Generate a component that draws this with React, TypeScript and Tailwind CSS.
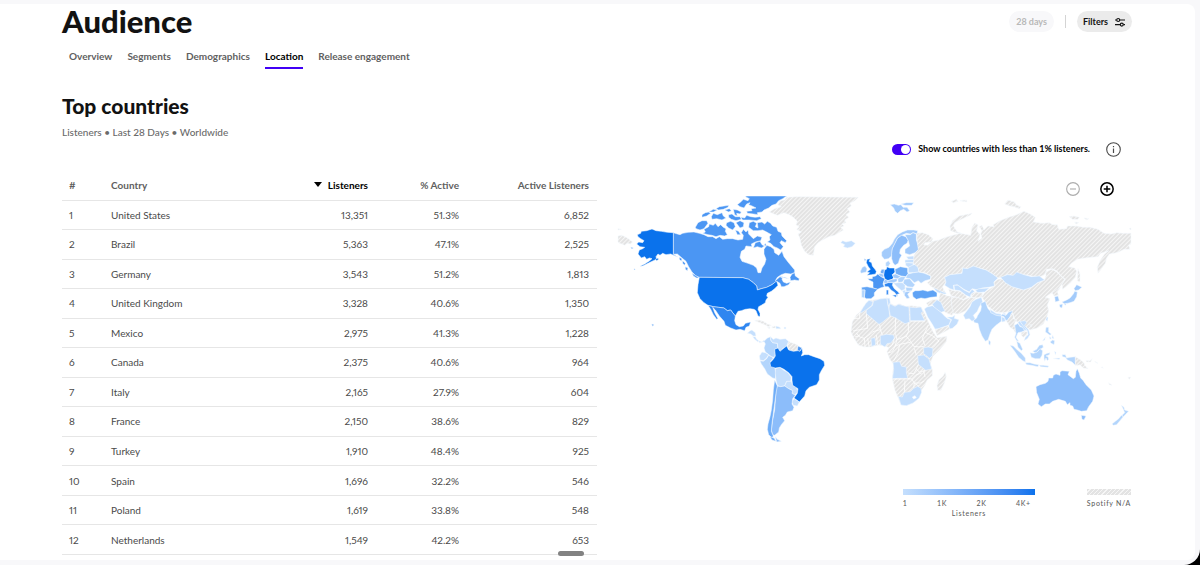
import { useState } from 'react';
import clsx from 'clsx';

interface CountryRow {
  country: string;
  listeners: string;
  active: string;
  activeListeners: string;
}

interface Shape {
  d: string;
  fill: string;
}

interface Region {
  id: string;
  x: number;
  y: number;
  shapes: Shape[];
  borders?: string;
}

const tabs = ['Overview', 'Segments', 'Demographics', 'Location', 'Release engagement'];

const rows: CountryRow[] = [
  { country: 'United States', listeners: '13,351', active: '51.3%', activeListeners: '6,852' },
  { country: 'Brazil', listeners: '5,363', active: '47.1%', activeListeners: '2,525' },
  { country: 'Germany', listeners: '3,543', active: '51.2%', activeListeners: '1,813' },
  { country: 'United Kingdom', listeners: '3,328', active: '40.6%', activeListeners: '1,350' },
  { country: 'Mexico', listeners: '2,975', active: '41.3%', activeListeners: '1,228' },
  { country: 'Canada', listeners: '2,375', active: '40.6%', activeListeners: '964' },
  { country: 'Italy', listeners: '2,165', active: '27.9%', activeListeners: '604' },
  { country: 'France', listeners: '2,150', active: '38.6%', activeListeners: '829' },
  { country: 'Turkey', listeners: '1,910', active: '48.4%', activeListeners: '925' },
  { country: 'Spain', listeners: '1,696', active: '32.2%', activeListeners: '546' },
  { country: 'Poland', listeners: '1,619', active: '33.8%', activeListeners: '548' },
  { country: 'Netherlands', listeners: '1,549', active: '42.2%', activeListeners: '653' },
];

const NA = 'url(#hatch)';
const C1 = '#c5dffd';
const C2 = '#b3d5fc';
const C3 = '#a3cbfb';
const C4 = '#8cbdfa';
const C5 = '#6fadf7';
const C6 = '#4b96f3';
const C7 = '#2f86f0';
const C8 = '#0a72ec';

// each region has its own origin; shapes are drawn at three units per map unit
const regions: Region[] = [
  {
    id: 'north-america',
    x: 612,
    y: 190,
    shapes: [
      { fill: C6, d: 'M184 128 196 132 204 134 212 130 228 127 246 126 262 130 276 134 288 140 302 140 312 146 322 140 332 148 346 146 362 146 378 150 392 148 394 136 388 128 394 118 402 126 408 120 410 132 416 138 424 146 436 138 450 142 446 152 430 156 418 162 420 170 402 168 398 178 388 184 384 202 390 214 408 220 424 226 434 234 438 248 446 248 450 234 458 222 462 208 456 192 456 178 464 166 476 170 486 178 488 188 500 196 510 184 516 200 528 216 538 228 548 240 548 248 536 252 520 250 508 254 496 262 490 272 504 260 512 260 510 268 514 276 524 280 536 276 530 284 516 290 508 290 504 280 494 274 480 284 464 292 448 296 436 300 434 288 424 278 410 268 392 263 262 262 252 258 240 246 230 230 222 214 210 204 196 192 184 193Z' },
      { fill: C6, d: 'M534 262 540 252 548 248 550 258 562 266 560 272 548 270 536 272Z M506 262 518 262 530 266 520 264Z M202 202 210 206 208 214 202 208Z M212 212 220 220 218 226 212 220Z M220 230 228 234 226 242 220 238Z M240 250 250 256 262 264 254 264 244 258Z' },
      { fill: C6, d: 'M250 112 258 98 270 92 284 92 288 100 282 108 276 116 264 120 252 116Z' },
      { fill: C6, d: 'M276 118 290 110 292 102 304 106 310 100 318 110 326 104 334 112 342 116 340 124 346 134 338 138 324 136 312 140 300 136 288 134 272 130 280 126Z' },
      { fill: C6, d: 'M270 74 280 68 290 66 296 70 284 78 270 82Z M298 80 304 70 316 74 330 68 334 78 342 84 330 90 314 86 300 88Z M290 66 304 58 316 60 304 66Z M312 56 322 50 336 48 350 46 348 52 334 58 320 60Z M338 60 352 56 358 62 350 66Z M364 58 376 60 388 66 384 72 374 70 376 78 368 74Z' },
      { fill: C6, d: 'M350 74 360 72 370 80 384 80 388 88 372 92 358 88 350 82Z M344 98 356 94 366 98 370 110 362 120 350 114 342 106Z M372 98 384 92 396 98 394 110 384 114 378 106Z M370 120 380 124 386 134 376 134Z' },
      { fill: C6, d: 'M386 82 398 84 404 76 416 80 430 82 444 80 448 86 434 92 412 90 392 90Z' },
      { fill: C6, d: 'M376 44 386 36 394 28 408 32 412 26 400 20 404 18 524 18 512 26 500 32 492 42 480 46 470 54 456 60 450 66 436 68 438 74 424 72 406 70 404 64 420 62 418 56 432 54 420 48 410 44 414 38 404 42 396 54 384 50Z' },
      { fill: C6, d: 'M410 112 412 98 424 94 434 100 430 110 438 114 436 98 450 96 458 102 466 94 476 100 482 108 494 112 498 124 508 128 510 138 524 152 520 158 508 152 504 158 514 170 506 180 496 174 486 170 476 160 466 156 474 150 472 140 478 134 464 126 452 120 438 122 424 122Z' },
      { fill: C6, d: 'M430 158 444 154 450 164 458 168 448 174 436 170 424 174Z M456 166 460 160 464 168Z' },
      { fill: C8, d: 'M76 134 86 130 88 124 104 122 120 117 132 122 148 124 166 127 184 128 184 193 198 202 190 198 176 192 162 194 152 190 144 196 138 192 132 200 134 208 124 212 108 220 92 228 84 229 98 222 112 213 120 206 112 204 104 208 98 200 88 204 78 192 82 180 92 176 98 172 84 170 74 162 80 156 92 158 96 152 86 146 78 140Z' },
      { fill: C8, d: 'M130 208 138 204 140 208 134 212Z M56 172 64 174 60 176Z M66 236 70 238 66 240Z' },
      { fill: C8, d: 'M262 262 392 263 410 268 424 278 434 288 436 300 448 296 464 292 480 284 490 276 494 274 498 286 488 296 478 304 466 310 464 318 468 322 462 330 460 338 448 346 440 350 438 358 444 370 444 380 438 378 432 362 426 358 414 356 400 358 388 362 378 364 370 378 362 368 356 360 346 362 336 354 320 352 304 350 288 346 276 338 264 326 256 308 258 284Z' },
      { fill: C7, d: 'M288 346 304 350 320 352 336 354 346 362 356 360 362 368 370 378 368 392 372 404 382 410 394 408 400 400 416 396 412 408 402 412 398 422 384 418 372 420 356 414 340 406 336 394 322 378 310 360 302 352 308 368 318 386 314 388 304 374 296 358Z' },
      { fill: C7, d: 'M119 402 126 404 122 409Z' },
      { fill: NA, d: 'M18 138 30 136 46 144 62 156 56 162 46 160 38 166 30 162 22 160 18 156Z M18 116 28 118 18 120Z' },
      { fill: NA, d: 'M428 392 440 390 454 394 466 402 478 406 470 410 458 404 444 398Z M480 410 490 408 490 414 480 414Z M466 412 474 412 472 416Z' },
      { fill: C1, d: 'M492 408 504 412 506 416 492 416Z M516 412 522 412 522 416 516 416Z' },
    ],
  },
  {
    id: 'greenland',
    x: 740,
    y: 190,
    shapes: [
      { fill: NA, d: 'M88 66 104 56 124 50 114 44 120 32 134 30 140 22 172 20 355 22 344 32 330 40 334 48 322 56 330 66 318 74 326 82 314 90 318 98 306 102 312 108 302 112 310 120 296 128 284 136 266 140 248 150 234 158 224 170 220 196 206 194 194 184 184 166 180 146 174 132 184 126 170 118 178 110 168 104 172 94 160 82 148 74 132 68 112 76Z' },
      { fill: C1, d: 'M302 158 308 152 318 156 334 152 346 160 336 170 322 174 310 170 314 164Z' },
    ],
  },
  {
    id: 'south-america',
    x: 740,
    y: 320,
    shapes: [
      { fill: C1, d: 'M22 40 30 32 36 30 46 38 48 48 40 48 32 42Z M38 50 46 50 50 58 56 62 54 66 44 58Z M56 62 66 66 72 60 76 66 68 66 58 68Z' },
      { fill: C2, d: 'M72 84 76 72 72 64 82 54 92 50 92 60 98 68 112 70 114 84 104 88 106 100 104 112 94 110 84 102 76 96Z' },
      { fill: C1, d: 'M92 50 100 58 108 54 120 58 136 56 146 64 142 74 140 80 130 84 122 94 114 86 112 70 98 68 92 60Z' },
      { fill: NA, d: 'M146 64 154 68 160 70 174 76 172 84 172 92 160 94 148 90 142 78Z' },
      { fill: C6, d: 'M174 78 186 84 180 94 172 92Z' },
      { fill: C1, d: 'M58 108 66 96 76 98 86 104 80 114 70 122 60 120Z' },
      { fill: C2, d: 'M60 122 70 124 80 116 86 106 94 110 100 114 92 124 92 138 104 142 108 158 106 176 98 174 82 162 74 146 64 132Z' },
      { fill: C1, d: 'M106 146 120 142 130 150 144 158 154 172 152 184 140 184 134 198 120 200 112 196 108 180 106 162Z' },
      { fill: C1, d: 'M134 198 140 184 154 184 158 196 168 200 172 210 172 218 164 224 156 220 158 212 146 206Z' },
      { fill: C8, d: 'M104 88 114 84 120 94 132 84 140 78 146 90 160 94 174 92 180 94 186 84 188 98 184 108 194 104 206 104 222 110 240 116 252 124 254 136 244 152 238 164 238 180 230 194 208 202 198 212 194 228 178 246 162 234 172 220 174 206 158 196 156 180 156 170 146 158 132 148 120 142 106 144 92 140 90 128 100 118 106 108Z' },
      { fill: C1, d: 'M162 236 178 246 172 258 160 256 156 246Z' },
      { fill: C4, d: 'M112 198 122 200 134 198 146 206 158 212 156 220 166 226 158 236 156 252 162 262 158 272 142 276 136 286 128 292 134 302 124 314 118 324 116 336 104 346 98 344 94 330 98 300 104 270 106 240 108 210Z' },
      { fill: C5, d: 'M104 180 112 198 108 220 104 250 100 280 96 310 94 334 100 348 96 354 86 344 82 328 84 312 90 290 94 270 98 240 100 210Z' },
      { fill: C5, d: 'M90 350 102 354 108 364 96 360Z' },
      { fill: C4, d: 'M106 350 112 358 124 364 110 366Z' },
    ],
  },
  {
    id: 'europe',
    x: 845,
    y: 190,
    shapes: [
      { fill: C3, d: 'M136 44 148 42 160 46 168 44 174 52 186 52 194 62 186 66 176 58 166 62 158 70 150 64 146 54Z M168 42 184 38 206 38 200 46 180 46Z' },
      { fill: C3, d: 'M110 186 118 178 132 172 142 160 148 148 158 134 172 126 188 120 206 120 218 122 216 132 204 128 196 132 184 130 170 136 158 144 150 160 142 176 140 198 130 206 118 208 110 198Z' },
      { fill: C4, d: 'M140 190 142 176 150 160 158 144 170 136 182 140 190 150 186 160 176 166 166 178 164 190 170 196 164 206 160 220 150 226 144 218 140 206Z' },
      { fill: C3, d: 'M180 134 196 134 204 128 214 132 214 150 220 166 222 178 210 188 194 194 180 190 180 178 194 168 190 152Z' },
      { fill: C8, d: 'M66 208 76 206 72 214 80 218 82 228 90 238 94 244 92 252 80 254 66 256 74 248 66 246 76 238 70 230 64 218Z M58 206 62 208 60 214Z' },
      { fill: C3, d: 'M46 244 52 232 60 228 66 236 64 246 48 250Z' },
      { fill: C2, d: 'M122 218 130 212 136 220 130 230 122 228Z' },
      { fill: C8, d: 'M118 240 124 238 126 230 134 234 148 234 150 246 142 254 146 262 142 268 128 272 120 268 116 256Z' },
      { fill: C5, d: 'M106 246 110 238 118 238 116 252 108 250Z' },
      { fill: C3, d: 'M100 252 108 250 116 254 116 262 106 260Z' },
      { fill: C6, d: 'M68 266 82 266 82 260 92 258 98 252 108 260 120 266 116 276 114 282 118 290 106 294 98 298 84 294 84 276 72 270Z' },
      { fill: '#5fa3f5', d: 'M50 292 66 290 84 294 98 298 88 308 88 318 78 326 64 326 58 322 60 300 50 300Z' },
      { fill: C2, d: 'M50 300 60 300 58 324 50 322Z' },
      { fill: C3, d: 'M116 276 120 268 130 272 128 280 118 280Z' },
      { fill: C3, d: 'M128 272 142 268 156 266 156 274 146 278 130 278Z' },
      { fill: C7, d: 'M118 282 130 278 144 278 142 286 148 296 160 306 164 312 158 312 156 320 150 308 138 300 130 290 120 290Z M142 316 156 314 152 322Z M124 300 130 300 130 314 124 314Z' },
      { fill: C5, d: 'M150 238 166 230 188 234 188 246 190 252 182 260 168 258 152 252Z' },
      { fill: C3, d: 'M142 254 152 252 168 260 158 266 146 264Z' },
      { fill: C2, d: 'M158 266 168 260 182 260 178 268 172 276 160 278Z' },
      { fill: C1, d: 'M184 200 206 198 208 208 190 208Z M180 210 208 208 210 218 192 218 180 218Z M182 218 192 218 206 220 202 228 190 232 182 226Z' },
      { fill: C1, d: 'M190 232 202 226 212 222 220 232 222 246 206 248 190 248Z' },
      { fill: C2, d: 'M188 252 206 248 222 246 238 250 258 258 256 268 240 272 228 280 220 272 208 278 196 266 182 264Z' },
      { fill: C2, d: 'M178 268 194 266 204 278 210 284 204 292 188 290 174 280Z' },
      { fill: C1, d: 'M146 280 158 278 172 278 180 286 180 298 170 302 156 290Z' },
      { fill: C2, d: 'M182 292 204 294 200 302 184 304Z' },
      { fill: C3, d: 'M176 306 198 304 188 312 194 324 186 326 178 316Z' },
      { fill: C1, d: 'M172 302 182 300 178 314Z' },
      { fill: '#5fa3f5', d: 'M202 308 210 302 222 302 234 300 248 304 264 300 276 308 276 320 258 322 240 326 228 324 214 328 204 320Z' },
      { fill: C1, d: 'M264 292 282 294 298 302 304 312 290 312 276 306Z' },
    ],
  },
  {
    id: 'asia',
    x: 950,
    y: 190,
    shapes: [
      { fill: NA, d: 'M-99 130-83 128-65 134-51 146-57 156-75 158-79 164-67 166-53 154-33 150-19 144 0 138 30 130 62 136 66 112 74 100 84 104 80 122 90 134 84 154 96 144 92 132 96 122 88 110 96 106 102 120 114 108 132 110 130 104 150 92 176 82 200 74 222 64 240 72 256 82 250 96 276 100 298 98 308 104 322 104 326 118 350 116 352 108 378 108 400 112 420 112 444 118 462 130 484 132 500 128 518 130 543 130 543 162 536 166 540 178 522 178 506 186 492 190 478 192 470 204 466 220 456 234 444 250 442 232 450 212 464 192 476 182 452 190 444 200 424 202 404 204 382 208 364 220 356 230 374 234 380 244 376 262 362 278 346 292 338 298 336 282 346 268 334 258 322 244 308 236 290 238 284 254 270 260 244 258 222 254 200 248 190 256 172 254 156 262 144 264 128 252 108 240 94 236 70 230 52 236 38 234 36 250 20 252 0 254-16 262-12 276-22 290-16 308-30 302-56 290-68 278-58 270-57 258-75 248-93 246-96 232-110 220-108 196-104 190-95 178-97 166-99 150Z' },
      { fill: NA, d: 'M0 108 8 92 28 78 66 70 60 76 34 88 14 98 10 108 22 126 34 130 18 128 2 122Z' },
      { fill: NA, d: 'M164 42 174 30 186 34 194 36 198 44 212 50 208 56 192 50 180 48Z M358 80 370 78 388 82 384 88 368 88Z M402 84 416 86 410 90Z M374 96 386 98 378 102Z M4 34 20 28 24 34 10 38Z M30 32 50 30 50 36Z M538 116 543 114 543 120Z M384 236 390 252 390 276 382 272Z' },
      { fill: C1, d: 'M0 254 20 252 36 250 38 234 52 236 70 228 94 236 108 240 128 252 144 264 132 276 134 288 116 292 96 294 84 300 66 296 58 306 42 298 22 284 10 286 12 300 0 296-16 286-12 276-16 262Z' },
      { fill: C1, d: 'M12 286 24 286 42 300 58 308 66 298 74 304 62 314 62 322 48 316 30 302 14 300Z' },
      { fill: C1, d: 'M76 302 86 296 118 294 104 306 84 308Z' },
      { fill: NA, d: 'M-4 298 12 302 30 304 46 316 52 322 40 328 22 322 4 318 0 310Z' },
      { fill: NA, d: 'M64 312 76 306 98 310 96 320 78 324 66 322Z' },
      { fill: NA, d: 'M4 322 22 322 40 330 60 322 78 324 66 336 58 348 48 362 26 372 8 370 2 350Z' },
      { fill: NA, d: 'M-29 308-16 314-8 318 4 318 4 336 6 352 10 366 6 376-8 370-22 362-28 348-34 332Z' },
      { fill: NA, d: 'M144 268 156 266 166 278 186 290 220 300 246 292 264 278 284 270 288 256 286 246 306 238 320 246 332 258 344 268 336 282 322 300 310 306 296 314 286 322 300 326 292 344 296 362 290 382 280 402 262 414 240 420 226 410 210 400 196 392 190 374 184 364 160 368 136 366 116 350 104 336 96 320 104 308 120 296 134 288 132 276Z' },
      { fill: C1, d: 'M152 262 172 254 190 256 200 246 222 254 244 260 268 258 284 270 262 278 244 292 220 300 186 290 166 278Z' },
      { fill: C1, d: 'M40 376 48 366 60 350 66 336 78 328 94 322 98 336 88 350 82 364 70 376 76 388 66 394 58 386 46 388Z' },
      { fill: C3, d: 'M336 336 350 330 360 324 370 312 374 304 382 306 380 320 372 334 360 338 344 342Z M372 296 380 284 396 292 386 300 376 302Z M328 344 338 342 336 354 330 352Z M342 342 350 340 346 346Z' },
      { fill: C3, d: 'M314 320 324 318 328 332 316 336Z' },
      { fill: NA, d: 'M306 308 322 298 332 292 322 306 326 316 312 318Z' },
    ],
  },
  {
    id: 'south-asia',
    x: 960,
    y: 290,
    shapes: [
      { fill: C2, d: 'M64 50 62 40 76 34 80 46 84 56 94 66 110 74 124 76 128 72 138 76 146 66 158 62 152 78 142 92 136 90 132 80 124 78 124 94 108 106 96 118 90 132 84 150 76 154 66 138 58 118 54 100 44 98 40 92 50 84 52 78 62 62Z' },
      { fill: C1, d: 'M90 58 108 70 124 72 122 78 108 76 92 68Z M124 80 134 84 136 94 126 96Z M128 70 136 70 136 76Z' },
      { fill: C2, d: 'M86 150 92 156 90 166 86 162Z' },
      { fill: NA, d: 'M140 94 150 80 154 70 160 76 160 86 170 90 164 98 162 106 168 116 168 130 160 118 150 112Z' },
      { fill: C2, d: 'M164 106 174 100 180 110 192 112 194 122 184 126 174 128 168 142 176 154 170 152 164 142 168 130Z' },
      { fill: C1, d: 'M174 98 180 92 186 102 198 114 200 122 192 120 188 112 180 108Z' },
      { fill: C1, d: 'M180 94 196 92 200 98 194 106 206 120 210 134 202 146 192 152 196 142 204 134 202 122 190 108Z' },
      { fill: NA, d: 'M184 128 194 124 202 126 200 136 190 142 184 136Z' },
      { fill: C2, d: 'M170 154 180 160 188 178 184 182 174 172Z M218 184 230 178 238 166 248 164 250 172 238 180 228 190Z' },
      { fill: C2, d: 'M150 166 160 168 172 180 184 190 196 204 196 216 188 212 176 202 164 184Z' },
      { fill: C2, d: 'M196 218 210 218 222 222 236 224 234 230 214 226 200 224Z M238 226 250 226 266 228 264 232 242 230Z' },
      { fill: C2, d: 'M210 188 220 190 232 186 240 176 248 182 246 196 240 206 226 206 214 202Z' },
      { fill: C2, d: 'M252 204 252 194 262 190 270 188 268 194 258 198 264 200 266 208 262 212 258 204 254 214Z M284 184 288 188 286 194Z M280 206 300 204 298 208Z' },
      { fill: C2, d: 'M258 112 266 112 266 126 274 132 270 136 262 130 256 126Z M268 140 274 144 270 148Z M278 136 282 146 276 144Z M270 156 278 150 284 152 282 164 274 160Z M248 152 256 142 254 150Z' },
      { fill: C2, d: 'M260 82 264 82 262 94 258 90Z' },
      { fill: NA, d: 'M208 104 216 104 214 110Z' },
      { fill: C2, d: 'M306 194 316 194 320 204 330 202 346 200 346 226 336 216 322 210 316 202 308 200Z' },
      { fill: NA, d: 'M346 200 362 210 372 218 374 226 384 236 370 234 360 224 354 226 346 226Z M378 212 390 212 396 206 392 216 380 216Z M404 214 414 220 408 218Z M426 230 430 234 424 232Z M446 278 456 286 448 284Z M504 262 512 262 508 268Z' },
      { fill: C4, d: 'M228 290 240 284 256 280 264 274 266 264 278 264 280 256 288 252 300 256 300 246 306 242 328 244 324 254 340 266 346 262 348 244 352 236 358 250 362 264 370 272 378 284 394 300 402 318 398 334 386 350 380 362 364 364 352 360 342 358 338 348 330 346 330 338 322 344 316 334 296 328 278 334 268 342 256 342 244 350 234 342 238 328 230 308Z' },
      { fill: C4, d: 'M364 376 378 378 372 390 366 388Z' },
      { fill: C2, d: 'M484 346 492 352 494 360 506 364 498 372 490 380 486 376 494 368 490 358Z M456 402 466 394 476 386 484 376 490 380 480 392 470 404 460 406Z' },
    ],
  },
  {
    id: 'africa',
    x: 845,
    y: 285,
    shapes: [
      { fill: NA, d: 'M46 80 66 50 78 46 104 42 126 38 130 52 150 62 164 56 180 64 200 62 228 66 240 88 254 120 264 140 276 158 306 154 304 170 284 194 264 214 256 236 262 254 262 272 246 286 240 300 228 318 222 340 204 354 184 360 168 360 160 340 150 316 142 282 144 254 146 238 134 222 126 200 132 188 118 182 100 180 76 186 58 186 40 180 26 158 18 140 22 110 34 90Z' },
      { fill: C1, d: 'M62 56 72 46 84 50 80 62 64 74 48 84 46 82 54 68Z' },
      { fill: C1, d: 'M82 62 86 48 104 42 126 40 128 58 132 72 134 94 112 112 102 118 64 86 64 76Z' },
      { fill: C1, d: 'M126 40 134 40 136 54 130 62Z' },
      { fill: C1, d: 'M134 56 150 64 160 58 182 64 192 66 194 112 180 116 150 98 136 92 132 72Z' },
      { fill: C1, d: 'M194 66 212 68 228 66 234 80 228 84 240 108 196 108Z' },
      { fill: C1, d: 'M106 152 124 148 146 150 148 160 138 174 126 176 120 186 106 178Z' },
      { fill: C1, d: 'M78 160 90 158 92 180 80 184Z' },
      { fill: C1, d: 'M236 188 250 186 264 190 262 212 254 220 236 206Z' },
      { fill: C1, d: 'M218 212 236 210 252 222 256 236 260 252 242 256 220 238Z' },
      { fill: C1, d: 'M144 232 164 230 170 244 184 246 184 262 188 280 158 280 142 282 146 254Z' },
      { fill: C1, d: 'M160 334 172 336 178 322 196 320 206 310 218 304 228 310 230 322 222 340 204 354 184 362 168 360Z' },
      { fill: '#ffffff', d: 'M202 336 210 332 214 338 206 342Z' },
      { fill: NA, d: 'M300 262 304 274 298 294 288 316 278 316 276 300 282 284 294 274Z' },
      { fill: NA, d: 'M244 54 262 44 276 44 264 58 250 64Z' },
      { fill: C1, d: 'M262 58 276 44 288 52 294 66 300 78 288 82 268 70Z' },
      { fill: C1, d: 'M238 72 246 66 262 62 288 82 298 92 306 100 318 104 312 120 290 128 280 132 270 132 262 118 248 96Z' },
      { fill: C1, d: 'M306 96 322 96 330 90 328 100 342 104 336 118 322 130 312 132 312 120 320 104Z' },
      { fill: NA, d: 'M270 134 290 128 310 122 314 132 296 142 276 152Z' },
    ],
    borders:
      'M44 84V100H22 M64 86 68 130 44 134 24 138 M104 118 106 134 84 140 72 150 58 160 44 156 34 144 M106 134 112 150 M152 98 150 148 M190 112 190 140 184 154 196 168 206 184 222 186 236 184 M152 148 156 164 184 154 M148 160 142 180 132 188 M156 164 150 184 164 178 196 172 M150 184 142 200 128 204 M164 180 158 206 146 228 M196 108H240 M250 120 238 146 232 160 240 182 M240 142 262 152 282 168 264 188 M208 190 214 210 M220 238 214 252 224 262 240 256 M188 264 206 266 214 252 M188 280 200 282 212 270 230 264 M142 282H196 M178 322 180 286 M200 282 208 294 206 308 M208 294 226 294 238 288 M236 258 240 276 M58 160 60 186 M68 160 72 184 M94 150 98 180 M30 156 44 152 M208 294 222 304',
  },
];

function FiltersIcon() {
  return (
    <svg width="12" height="12" viewBox="0 0 12 12" fill="none" stroke="currentColor" strokeWidth="1.2" aria-hidden="true">
      <path d="M1 4h1.6M6 4h5M1 8.6h5M9.6 8.6H11" />
      <circle cx="4.2" cy="4" r="1.5" />
      <circle cx="7.8" cy="8.6" r="1.5" />
    </svg>
  );
}

function ListenerMap() {
  return (
    <svg viewBox="617 196 515 250" className="block w-full" role="img" aria-label="Listeners by country">
      <defs>
        <pattern id="hatch" width="9" height="9" patternUnits="userSpaceOnUse" patternTransform="rotate(45)">
          <rect width="9" height="9" fill="#e3e3e3" />
          <rect width="3" height="9" fill="#f6f6f6" />
        </pattern>
      </defs>
      {regions.map((region) => (
        <g key={region.id} transform={`translate(${region.x} ${region.y}) scale(0.33333)`} strokeLinejoin="round">
          {region.shapes.map((shape, index) => (
            <path key={index} d={shape.d} fill={shape.fill} stroke="#f4f9ff" strokeWidth="1.6" />
          ))}
          {region.borders && <path d={region.borders} fill="none" stroke="#ffffff" strokeWidth="2.4" />}
        </g>
      ))}
    </svg>
  );
}

export default function App() {
  const [activeTab, setActiveTab] = useState('Location');
  const [showSmall, setShowSmall] = useState(true);

  return (
    <div className="min-h-screen bg-black font-['Lato','Liberation_Sans',sans-serif] text-[#121212]">
      <div className="min-h-screen bg-[#f8f8fa] rounded-br-2xl pt-1 pr-[5px] pb-[5px]">
        <main className="bg-white rounded-r-lg pl-[62px] pr-[63px] pb-[5px]">
          <header className="flex items-center justify-between">
            <h1 className="text-[31px] leading-[35px] font-black">Audience</h1>
            <div className="flex items-center gap-[11px] text-[9px] leading-[21px] font-bold">
              <button disabled className="h-[21px] px-[7px] rounded-full bg-[#f8f8fa] text-[#b8b8b8]">
                28 days
              </button>
              <span className="w-px h-[13px] bg-[#d4d4d4]" />
              <button className="h-[21px] px-[6px] rounded-full bg-[#ebebeb] flex items-center gap-[6px]">
                Filters
                <FiltersIcon />
              </button>
            </div>
          </header>

          <nav className="mt-[9px] ml-[7px] flex gap-[15px] text-[10px] leading-4 font-bold">
            {tabs.map((tab) => (
              <a
                key={tab}
                href="#"
                onClick={() => setActiveTab(tab)}
                className={clsx(
                  'pb-[3px] border-b-2',
                  tab === activeTab ? 'border-[#4100f5] text-black' : 'border-transparent text-[#5f5f5f]'
                )}
              >
                {tab}
              </a>
            ))}
          </nav>

          <h2 className="mt-[25px] text-[21px] leading-6 font-black">Top countries</h2>
          <p className="mt-[6px] text-[10px] leading-4 font-medium text-[#6a6a6a]">Listeners • Last 28 Days • Worldwide</p>

          <section className="mt-px flex">
            <div className="relative w-1/2 pt-[29px]">
              <table className="w-full h-[385px] table-fixed text-[10px] leading-4 proportional-nums text-[#4a4a4a]">
                <thead>
                  <tr className="h-[30px] border-b border-[#e6e6e6] text-[#5f5f5f]">
                    <th className="w-[49px] pl-[7px] text-left">#</th>
                    <th className="text-left">Country</th>
                    <th className="w-[100px] text-right text-black">
                      <button className="inline-flex items-center gap-[6px] align-top font-bold">
                        <svg width="8" height="5" viewBox="0 0 8 5" aria-hidden="true">
                          <path d="M0 0h8L4 5z" fill="currentColor" />
                        </svg>
                        Listeners
                      </button>
                    </th>
                    <th className="w-[91px] text-right">% Active</th>
                    <th className="w-[138px] pr-2 text-right">Active Listeners</th>
                  </tr>
                </thead>
                <tbody>
                  {rows.map((row, index) => (
                    <tr key={row.country} className="border-b border-[#e6e6e6]">
                      <td className="pl-[7px]">{index + 1}</td>
                      <td>{row.country}</td>
                      <td className="text-right">{row.listeners}</td>
                      <td className="text-right">{row.active}</td>
                      <td className="pr-2 text-right">{row.activeListeners}</td>
                    </tr>
                  ))}
                </tbody>
              </table>
              <div className="absolute -bottom-px right-[13px] w-[26px] h-[5px] rounded-full bg-[#828282]" />
            </div>

            <div className="w-1/2 pl-5">
              <div className="flex h-4 items-center justify-end pr-[11px]">
                <label className="flex items-center gap-[7px] text-[9px] leading-4 font-bold text-black">
                  <input
                    type="checkbox"
                    role="switch"
                    checked={showSmall}
                    onChange={(e) => setShowSmall(e.target.checked)}
                    className="appearance-none w-[19px] h-[11px] p-px rounded-full bg-[#b3b3b3] checked:bg-[#4100f5] before:block before:size-[9px] before:rounded-full before:bg-white checked:before:translate-x-2"
                  />
                  Show countries with less than 1% listeners.
                </label>
                <button aria-label="About this map" className="ml-4 text-[#4a4a4a]">
                  <svg width="15" height="15" viewBox="0 0 15 15" fill="none" stroke="currentColor">
                    <circle cx="7.5" cy="7.5" r="6.8" strokeWidth="1.1" />
                    <path d="M7.5 6.5v4.5M7.5 4v1.2" strokeWidth="1.2" />
                  </svg>
                </button>
              </div>

              <div className="mt-[25px] flex h-[14px] justify-end gap-5 pr-[18px]">
                <button disabled aria-label="Zoom out" className="text-[#adadad]">
                  <svg width="14" height="14" viewBox="0 0 15 15" fill="none" stroke="currentColor" strokeWidth="1.2">
                    <circle cx="7.5" cy="7.5" r="6.8" />
                    <path d="M4.3 7.5h6.4" />
                  </svg>
                </button>
                <button aria-label="Zoom in" className="text-black">
                  <svg width="14" height="14" viewBox="0 0 15 15" fill="none" stroke="currentColor" strokeWidth="1.6">
                    <circle cx="7.5" cy="7.5" r="6.6" />
                    <path d="M4 7.5h7M7.5 4v7" />
                  </svg>
                </button>
              </div>

              <ListenerMap />

              <div className="mt-[43px] flex justify-end gap-[52px] pr-px text-[7px] leading-[10px] font-medium tracking-widest text-[#5f5f5f]">
                <div className="w-[132px]">
                  <div className="h-[6px] bg-linear-to-r from-[#c5dffd] to-[#0a72ec]" />
                  <div className="mt-[3px] flex justify-between pr-1">
                    <span>1</span>
                    <span>1K</span>
                    <span>2K</span>
                    <span>4K+</span>
                  </div>
                  <div className="text-center">Listeners</div>
                </div>
                <div>
                  <div className="h-[6px] bg-[repeating-linear-gradient(135deg,#e3e3e3_0_2px,#f6f6f6_2px_3px)]" />
                  <div className="mt-[3px]">Spotify N/A</div>
                </div>
              </div>
            </div>
          </section>
        </main>
      </div>
    </div>
  );
}
